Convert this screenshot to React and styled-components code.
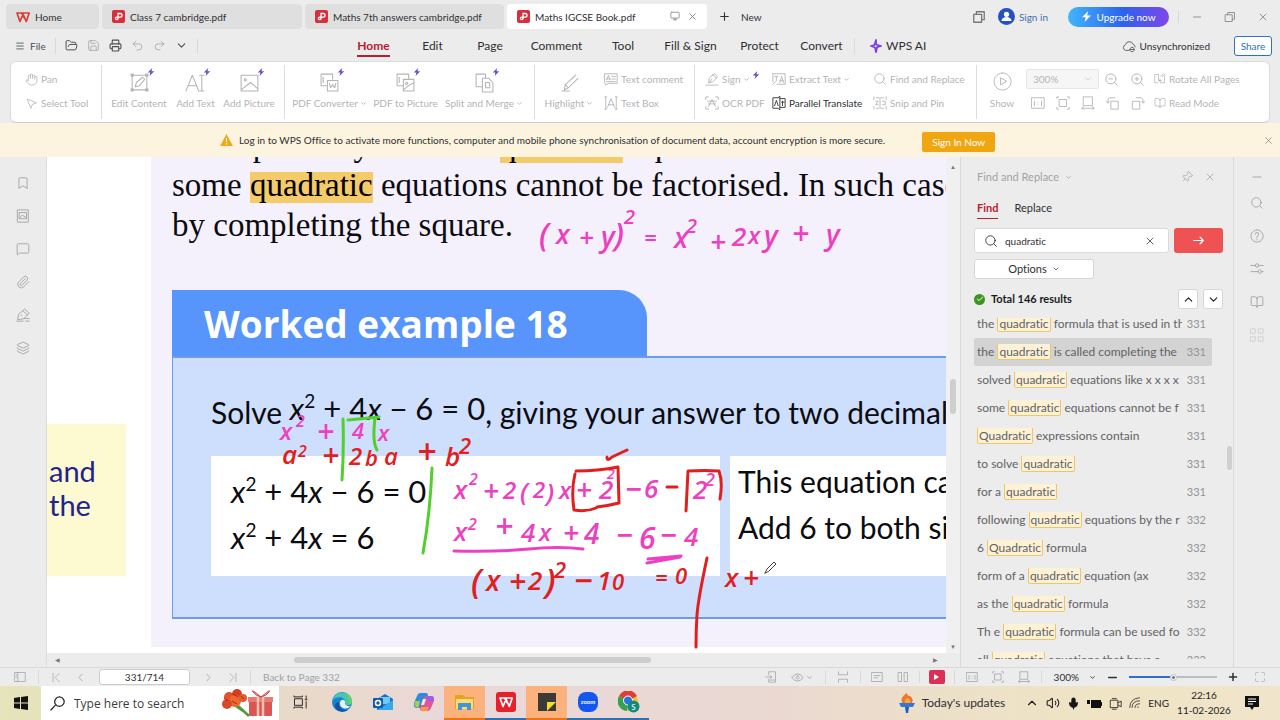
import React, { useState } from "react";
import styled, { createGlobalStyle, css } from "styled-components";
import {
    Bookmark, BookOpen, Check, ChevronDown, ChevronLeft, ChevronRight, ChevronUp, FolderOpen,
    Hand, Layers, Maximize, Menu, MessageSquare, Mic, Minus, Monitor, MousePointer2, Paperclip,
    PenTool, Pin, Plus, Printer, Redo2, Save, Search, Undo2, Volume2, X, ZoomIn, ZoomOut,
} from "lucide-react";

const Colors = {
    chrome: "#ececec",
    line: "#d9d9d9",
    text: "#2f2f33",
    faded: "#b4b4b6",
    red: "#b8202f",
    blue: "#2f6fc4",
    page: "#f4f1fd",
    header: "#5794fc",
    panel: "#cddffc",
    mark: "#f4cb68",
    pink: "#ec40c0",
    inkRed: "#e0201f",
    green: "#52cf2c",
};

const GlobalStyle = createGlobalStyle`
    * { box-sizing: border-box; }
    body { margin: 0; background: ${Colors.chrome}; }
    button, input, select { font: inherit; color: inherit; }
    button { background: none; border: 0; padding: 0; white-space: nowrap; }
    svg { flex: none; }
`;

const Window = styled.div`
    display: flex;
    flex-direction: column;
    height: 100vh;
    overflow: hidden;
    color: ${Colors.text};
    font-family: Lato, "Open Sans", sans-serif;
    font-size: 10px;
    font-variant-ligatures: none;
    line-height: 16px;
`;

const Rule = styled.span`
    width: 1px;
    height: 14px;
    background: ${Colors.line};
`;

/* title bar */

const TitleBar = styled.header`
    display: flex;
    align-items: center;
    height: 33px;
    padding: 0 11px 0 6px;
`;

const Tab = styled.button`
    display: flex;
    align-items: center;
    gap: 5px;
    width: ${({ $w }) => $w}px;
    height: 25px;
    margin-right: 3px;
    padding: 0 9px 0 10px;
    border-radius: 4px;
    background: ${({ $active }) => ($active ? "#fff" : "#dfdfdf")};
    color: ${Colors.text};
`;

const TabTools = styled.span`
    display: flex;
    gap: 7px;
    margin-left: auto;
    color: #88888c;
`;

const NewButton = styled.button`
    display: flex;
    align-items: center;
    gap: 10px;
    margin-left: 8px;
`;

const TitleRight = styled.div`
    display: flex;
    align-items: center;
    margin-left: auto;
    color: #77777a;
`;

const SignIn = styled.a`
    display: flex;
    align-items: center;
    gap: 4px;
    margin: 0 20px 0 12px;
    color: #3e70b4;
    text-decoration: none;
`;

const Upgrade = styled.button`
    display: flex;
    align-items: center;
    justify-content: center;
    gap: 4px;
    width: 101px;
    height: 20px;
    margin-right: 9px;
    border-radius: 10px;
    background: linear-gradient(90deg, #41b5fb, #2d62ee 55%, #8046ea);
    color: #fff;
`;

const WindowControls = styled.div`
    display: flex;
    align-items: center;
    gap: 21px;
    padding-left: 12px;
    border-left: 1px solid ${Colors.line};
`;

/* menu bar */

const MenuBar = styled.nav`
    display: flex;
    align-items: center;
    height: 28px;
    padding: 0 8px 3px 15px;
`;

const QuickTools = styled.div`
    display: flex;
    align-items: center;
    width: 329px;
    gap: 9px;
    color: #4d4d50;
`;

const FileButton = styled.button`
    display: flex;
    align-items: center;
    gap: 5px;
    padding-right: 9px;
    border-right: 1px solid ${Colors.line};
`;

const MenuItem = styled.button`
    width: ${({ $w }) => $w}px;
    height: 27px;
    font-size: 12px;
    text-align: center;

    span {
        display: inline-block;
        padding: 4px 0 1px;
        border-bottom: 2px solid transparent;
    }

    ${({ $active }) => $active && css`
        color: ${Colors.red};
        font-weight: 700;

        span { border-color: ${Colors.red}; }
    `}
`;

const AiButton = styled.button`
    display: flex;
    align-items: center;
    gap: 4px;
    padding-left: 15px;
    border-left: 1px solid ${Colors.line};
    font-size: 12px;
`;

const MenuRight = styled.div`
    display: flex;
    align-items: center;
    gap: 24px;
    margin-left: auto;
`;

const SyncState = styled.span`
    display: flex;
    align-items: center;
    gap: 3px;
`;

const ShareButton = styled.button`
    width: 38px;
    height: 20px;
    border: 1px solid ${Colors.blue};
    border-radius: 3px;
    background: #fff;
    color: ${Colors.blue};
`;

/* ribbon */

const Ribbon = styled.section`
    display: flex;
    height: 62px;
    flex: none;
    margin: 0 10px;
    border: 1px solid #dcdcdc;
    border-bottom-color: #cfcfcf;
    border-radius: 6px;
    background: #fff;
    color: ${Colors.faded};
`;

const Group = styled.div`
    display: flex;
    width: ${({ $w }) => $w}px;
    margin: 3px 0;
    padding: 2px 0 0 ${({ $pad }) => $pad}px;
    border-right: ${({ $last }) => ($last ? 0 : 1)}px solid #dedede;
`;

const Stack = styled.div`
    display: flex;
    flex-direction: column;
    width: ${({ $w }) => $w}px;
    padding-left: ${({ $pad }) => $pad || 0}px;
`;

const Label = styled.span`
    display: flex;
    align-items: center;
    gap: 2px;
`;

const SmallTool = styled.button`
    display: flex;
    align-items: center;
    gap: 3px;
    height: 24px;
    color: ${({ $on }) => ($on ? Colors.text : "inherit")};

    ${Label} svg + svg { align-self: flex-start; }
`;

const BigTool = styled.button`
    display: flex;
    flex-direction: column;
    align-items: center;
    width: ${({ $w }) => $w}px;
    height: 48px;
    padding-top: 5px;
`;

const BigIcon = styled.span`
    position: relative;
    height: 23px;

    > svg:nth-child(2) {
        position: absolute;
        left: 18px;
        top: -4px;
    }
`;

const ZoomSelect = styled.select`
    width: 73px;
    height: 20px;
    padding-left: 6px;
    appearance: none;
    border: 1px solid #e6e6e6;
    border-radius: 2px;
    background: #f6f6f6;
`;

const SelectWrap = styled.label`
    display: flex;
    align-items: center;

    svg { margin-left: -16px; }
`;

const IconRow = styled.div`
    display: flex;
    align-items: center;
    gap: ${({ $gap }) => $gap}px;
    height: 24px;
    padding-left: ${({ $pad }) => $pad}px;
`;

/* notice */

const Notice = styled.aside`
    display: flex;
    align-items: center;
    height: 34px;
    flex: none;
    padding: 0 6px 0 220px;
    background: #fdf4df;
`;

const NoticeText = styled.p`
    margin: 0 37px 0 6px;
    white-space: nowrap;
`;

const NoticeButton = styled.button`
    width: 73px;
    height: 20px;
    margin-top: 4px;
    border-radius: 2px;
    background: #f0a610;
    color: #fff;
`;

const CloseButton = styled.button`
    display: flex;
    margin-left: auto;
    color: #77777a;
`;

/* workspace */

const Workspace = styled.main`
    display: flex;
    flex: 1;
    min-height: 0;
`;

const Rail = styled.nav`
    display: flex;
    flex-direction: column;
    align-items: center;
    gap: 19px;
    width: ${({ $w }) => $w}px;
    padding-top: ${({ $top }) => $top}px;
    color: #a0a0a3;
`;

const RailButton = styled.button`
    display: flex;
    margin-bottom: ${({ $tight }) => ($tight ? -7 : 0)}px;
`;

const Viewer = styled.section`
    display: grid;
    grid-template: minmax(0, 1fr) 14px / minmax(0, 1fr) 14px;
    flex: 1;
    min-width: 0;
    border-left: 1px solid #dddddd;
`;

const Sheet = styled.div`
    position: relative;
    display: flex;
    padding-bottom: 6px;
    overflow: hidden;
    background: #fff;
`;

const Margin = styled.div`
    flex: none;
    width: 104px;
    padding-top: 267px;
`;

const SideNote = styled.p`
    width: 79px;
    height: 152px;
    margin: 0;
    padding: 30px 0 0 2px;
    background: #fdf9d0;
    color: #23238e;
    font-size: 29px;
    line-height: 34px;
`;

const Page = styled.article`
    flex: 1;
    min-width: 0;
    padding-left: 21px;
    overflow: hidden;
    background: ${Colors.page};
    color: #0b0b10;
    white-space: nowrap;
`;

const BodyText = styled.p`
    margin: -32px 0 45px;
    font-family: "Liberation Serif", serif;
    font-size: 33px;
    line-height: 40px;
`;

const Mark = styled.mark`
    display: inline-block;
    padding-bottom: 5px;
    background: ${Colors.mark};
    line-height: 26px;
`;

const ExampleTitle = styled.h2`
    width: 475px;
    height: 66px;
    margin: 0;
    padding-left: 32px;
    border-radius: 0 28px 0 0;
    background: ${Colors.header};
    color: #fff;
    font: 700 37px/68px "Open Sans", sans-serif;
`;

const ExampleBody = styled.div`
    height: 263px;
    padding: 34px 0 0 38px;
    border: solid #6a9ce8;
    border-width: 2px 0 2px 1px;
    background: ${Colors.panel};
    font-size: 30px;
    line-height: 36px;
`;

const Question = styled.p`
    height: 36px;
    margin: 0 0 28px;
`;

const Formula = styled.span`
    font-size: 31px;
    line-height: 28px;
    vertical-align: ${({ $raised }) => ($raised ? 4 : 0)}px;

    sup {
        font-size: 19px;
        line-height: 18px;
        vertical-align: 12px;
    }
`;

const Steps = styled.div`
    display: flex;
    gap: 10px;
`;

const StepCard = styled.div`
    width: ${({ $w }) => $w}px;
    height: 120px;
    flex: ${({ $w }) => ($w ? "none" : 1)};
    padding: ${({ $top }) => $top}px 0 0 ${({ $left }) => $left}px;
    overflow: hidden;
    background: #fff;
    line-height: 46px;
`;

const InkLayer = styled.svg`
    position: absolute;
    left: 0;
    top: 0;
    fill: none;
    stroke-width: 3;
    stroke-linecap: round;
    stroke-linejoin: round;

    text {
        font-family: "Open Sans", sans-serif;
        font-style: italic;
        font-weight: 600;
        stroke: none;
    }
`;

const ScrollY = styled.div`
    display: flex;
    flex-direction: column;
    align-items: center;
    justify-content: space-between;
    padding: 6px 0 2px;
    background: #f0f0f0;
    color: #77777a;
    font-size: 6px;
    line-height: 8px;
`;

const ThumbY = styled.span`
    width: 6px;
    height: 35px;
    margin-bottom: 22px;
    border-radius: 3px;
    background: #cecece;
`;

const ScrollX = styled.div`
    display: flex;
    align-items: center;
    justify-content: space-between;
    padding: 0 8px;
    color: #77777a;
    font-size: 6px;
`;

const ThumbX = styled.span`
    width: 357px;
    height: 6px;
    margin-right: 48px;
    border-radius: 3px;
    background: #cdcdcd;
`;

/* find panel */

const FindPanel = styled.aside`
    display: flex;
    flex-direction: column;
    width: 274px;
    padding: 12px 10px 8px 13px;
    border: solid ${Colors.line};
    border-width: 0 1px;
`;

const PanelHead = styled.div`
    display: flex;
    align-items: center;
    gap: 6px;
    height: 16px;
    padding: 0 7px 0 3px;
    color: #a3a3a6;
    font-size: 11px;
`;

const PanelTools = styled.span`
    display: flex;
    gap: 11px;
    margin-left: auto;
`;

const PanelTabs = styled.div`
    display: flex;
    gap: 16px;
    margin: 12px 0 9px;
    padding-left: 3px;
`;

const PanelTab = styled.button`
    height: 22px;
    border-bottom: 1px solid ${({ $active }) => ($active ? Colors.red : "transparent")};
    color: ${({ $active }) => ($active ? Colors.red : Colors.text)};
    font-weight: ${({ $active }) => ($active ? 700 : 400)};
    font-size: 11px;
`;

const SearchRow = styled.form`
    display: flex;
    gap: 5px;
`;

const SearchBox = styled.label`
    display: flex;
    flex: 1;
    align-items: center;
    min-width: 0;
    height: 25px;
    padding: 0 12px 0 9px;
    border: 1px solid #dadada;
    border-radius: 3px;
    background: #fff;

    input {
        flex: 1;
        min-width: 0;
        padding: 0 7px;
        border: 0;
        outline: 0;
        font-size: 10px;
    }
`;

const GoButton = styled.button`
    display: flex;
    flex: none;
    align-items: center;
    justify-content: center;
    width: 49px;
    height: 25px;
    border-radius: 3px;
    background: #ee5252;
    color: #fff;
`;

const OptionsButton = styled.button`
    display: flex;
    align-items: center;
    justify-content: center;
    gap: 5px;
    width: 120px;
    height: 20px;
    margin: 6px 0 10px;
    border: 1px solid #d6d6d6;
    border-radius: 3px;
    background: #fff;
    font-size: 11px;
`;

const Summary = styled.div`
    display: flex;
    align-items: center;
    height: 20px;
    gap: 5px;
    color: #1c1c1f;
    font-size: 11px;

    strong { margin: 0 auto 0 1px; }
`;

const Done = styled.span`
    display: flex;
    align-items: center;
    justify-content: center;
    width: 11px;
    height: 11px;
    border-radius: 50%;
    background: #3c9322;
    color: #fff;
`;

const StepButton = styled.button`
    display: flex;
    align-items: center;
    justify-content: center;
    width: 20px;
    height: 20px;
    border: 1px solid #d6d6d6;
    border-radius: 3px;
    background: #fff;
`;

const ResultsArea = styled.div`
    display: flex;
    justify-content: space-between;
    flex: 1;
    min-height: 0;
    margin: 9px -9px 0 0;
    overflow: hidden;
`;

const Results = styled.ul`
    flex: none;
    width: 238px;
    margin: -8px 0 0;
    padding: 0;
    list-style: none;
`;

const Result = styled.li`
    display: flex;
    align-items: center;
    gap: 5px;
    height: 28px;
    padding: 0 6px 0 3px;
    border-radius: 2px;
    background: ${({ $selected }) => ($selected ? "#d3d3d3" : "none")};
    color: #626266;
    font-size: 12px;

    small {
        color: #929296;
        font-size: 11px;
    }
`;

const Snippet = styled.span`
    flex: 1;
    overflow: hidden;
    white-space: nowrap;
`;

const Hit = styled.span`
    padding: 0 1px;
    border: 1px solid #efc566;
    border-radius: 2px;
    background: #fdf1d6;
`;

const ResultThumb = styled.span`
    width: 5px;
    height: 24px;
    margin-top: 128px;
    border-radius: 3px;
    background: #d0d0d0;
`;

/* status bar */

const StatusBar = styled.footer`
    display: flex;
    align-items: center;
    height: 19px;
    flex: none;
    padding: 0 14px;
    border-top: 1px solid ${Colors.line};
    color: #a0a0a3;
`;

const StatusGroup = styled.div`
    display: flex;
    align-items: center;
    gap: ${({ $gap }) => $gap}px;
    padding: 0 ${({ $pad }) => $pad || 0}px;
    border-right: ${({ $rule }) => ($rule ? 1 : 0)}px solid ${Colors.line};
`;

const StatusSpacer = styled.span`
    flex: 1;
`;

const PageInput = styled.input`
    width: 91px;
    height: 16px;
    padding: 0;
    border: 1px solid #cccccc;
    border-radius: 3px;
    background: #fff;
    color: ${Colors.text};
    text-align: center;
`;

const PlayButton = styled.button`
    display: flex;
    align-items: center;
    justify-content: center;
    width: 16px;
    height: 14px;
    border-radius: 2px;
    background: #dc2f57;
`;

const ZoomControls = styled.div`
    display: flex;
    align-items: center;
    gap: 10px;
    padding-left: 12px;
    color: ${Colors.text};
`;

const ZoomSlider = styled.input`
    width: 88px;
    height: 8px;
    margin: 0;
    appearance: none;
    background: linear-gradient(90deg, ${Colors.blue} 50%, #bdbdbd 50%) center / 100% 2px no-repeat;

    &::-webkit-slider-thumb {
        appearance: none;
        width: 5px;
        height: 5px;
        border: 1px solid #fff;
        border-radius: 50%;
        background: #777;
        box-shadow: 0 0 0 1px #ccc;
    }
`;

const FullScreen = styled.button`
    display: flex;
    margin-left: 5px;
    color: #aaaaaa;
`;

/* taskbar */

const Taskbar = styled.footer`
    display: flex;
    height: 34px;
    flex: none;
    background: linear-gradient(90deg, #e6e4bb, #e8d9c9 24%, #ead8da 36%, #ead8d2 60%, #ecdfc9 72%, #efe4c4 86%, #f0e4cb);
`;

const StartButton = styled.button`
    display: flex;
    align-items: center;
    justify-content: center;
    width: 41px;
`;

const TaskSearch = styled.label`
    display: flex;
    align-items: center;
    gap: 9px;
    width: 238px;
    margin-right: 1px;
    padding: 0 6px 0 9px;
    background: #fff;

    input {
        flex: 1;
        min-width: 0;
        padding: 0;
        border: 0;
        outline: 0;
        background: none;
        font: 12px "Open Sans", sans-serif;
    }

    input::placeholder { color: #3c3c40; opacity: 1; }
`;

const TaskApp = styled.button`
    display: flex;
    align-items: center;
    justify-content: center;
    width: 41px;
    border-bottom: 2px solid ${({ $open }) => ($open === "alert" ? "#f2730e" : $open ? "#2a72b8" : "transparent")};
    background: ${({ $open }) => ($open === "alert" ? "#fbb27c" : "none")};
`;

const News = styled.button`
    display: flex;
    align-items: center;
    gap: 7px;
    margin-left: auto;
    font-size: 12px;
`;

const Tray = styled.div`
    display: flex;
    align-items: center;
    gap: 7px;
    padding: 0 21px 0 20px;
    color: #1d1d1f;
`;

const Clock = styled.time`
    display: flex;
    flex-direction: column;
    width: 56px;
    margin-right: 6px;
    line-height: 15px;
    text-align: center;
`;

/* drawings */

const Glyph = ({ d, size = 14, box = 16, color = "currentColor", weight = 1 }) => (
    <svg width={size} height={size} viewBox={`0 0 ${box} ${box}`} fill="none" stroke={color} strokeWidth={weight} strokeLinejoin="round" strokeLinecap="round">
        <path d={d} />
    </svg>
);

const Bolt = ({ size = 8, color = "#5b55c8" }) => (
    <svg width={size} height={size} viewBox="0 0 8 8" fill={color}><path d="M5.2 0 0.8 4.6h2.6L2.6 8l4.6-4.8H4.5z" /></svg>
);

const Down = ({ size = 7 }) => <ChevronDown size={size} strokeWidth={3} />;

const WpsLogo = ({ size = 14, color = "#dc3c36" }) => (
    <svg width={size} height={size} viewBox="0 0 14 14" fill="none" stroke={color} strokeWidth="1.7" strokeLinejoin="round">
        <path d="M1 3h12.2L10.3 11.5 7 4.2 4 11.5 1 3l4.6 0 2.7 5.2" />
    </svg>
);

const PdfIcon = () => (
    <svg width="13" height="13" viewBox="0 0 13 13" fill="none">
        <rect width="13" height="13" rx="2" fill="#d92f3d" />
        <path d="M6 9.5V3.5h2.2a1.8 1.8 0 0 1 0 3.7H4.6a1.2 1.2 0 1 0 1.2 1.4" stroke="#fff" strokeWidth="1.3" />
    </svg>
);

const Avatar = () => (
    <svg width="17" height="17" viewBox="0 0 17 17">
        <circle cx="8.5" cy="8.5" r="8.5" fill="#2450c4" />
        <circle cx="8.5" cy="6.3" r="2.6" fill="#fff" />
        <path d="M3.5 13a5 4 0 0 1 10 0z" fill="#fff" />
    </svg>
);

const Spark = () => (
    <svg width="12" height="14" viewBox="0 0 12 14" fill="none" stroke="#7d3fdc" strokeWidth="1.8" strokeLinejoin="round">
        <path d="M6 1v4.5L11 7 7 8.2 6 13 5 8.5 1 7l3.5-1z" />
    </svg>
);

const paths = {
    edit: "M3 3h14v14H3zM2 2h2v2H2zM16 2h2v2h-2zM2 16h2v2H2zM16 16h2v2h-2zM6 14l1-4 6-5 2 2-5 6z",
    type: "M1 18 7 3l6 15M3 13h8M14 3h4M16 3v15M14 18h4",
    picture: "M2 3h16v15H2zM6 6.5a1 1 0 1 0 .1 0M2 17l9-7 7 6",
    convert: "M7 13H2V2h11v5M8 8h10v10H8zM10 11l1 4 2-3 2 3 1-4M4 5v5",
    toPicture: "M7 13H2V2h11v4M4 5v5M8 7h10v11H8zM8 17l5-4 5-3M11 10a1 1 0 1 0 .1 0",
    merge: "M8 14H2V2h9v4M8 6h6l4 4v9H8zM11 10v5h4v-5z",
    marker: "M3 18h7M5 17l1-5 3 3zM6 12 16 3M9 15l9-9",
    comment: "M1 2h14v11H5l-3 2-1-2zM3 9l2-5 2 5M3 8h4M9 5h4M9 8h4M3 11h10",
    textBox: "M2 1v14M14 1v14M1 1h2M13 1h2M1 15h2M13 15h2M4 13l4-10 4 10M5 10h6",
    sign: "M1 15h14M4 12l1-5 4-4 4 4-4 4zM8 4l3-2 3 3-1 2M5 12l3-4",
    extract: "M1 2h14v12H6M1 2v9M1 14l3-3M3 5h4M5 5v5M9 12l2-7 2 7M9 10h4",
    ocr: "M1 4V1h3M12 1h3v3M1 12v3h3M12 15h3v-3M4 12l4-8 4 8M3 6h10M4 9h8",
    translate: "M7 2H1v12h6l2 2V0L7 2M9 3h6v10H9M3 11l2-6 2 6M11 7h3M12 6v5",
    snip: "M1 1v3M4 2h3M9 2h3M15 1v3M1 12v3M4 14h3M9 14h3M15 12v3M3 6h3l-3 4h3M8 3v10M11 6h3v4h-3",
    actual: "M1 2h14v12H1zM4 6v5M12 6v5M8 7v0M8 10v0",
    fitPage: "M4 4h8v8H4zM1 3V1h2M13 1h2v2M1 13v2h2M13 15h2v-2",
    fitWidth: "M3 1h10v10H3zM1 14h14M3 12l-2 2 2 2M13 12l2 2-2 2",
    rotateLeft: "M6 6h8v9H6zM10 2H4Q2 2 2 8M0 6l2 2 2-2",
    rotateRight: "M2 6h8v9H2zM6 2h6q2 0 2 6M12 6l2 2 2-2",
    rotateAll: "M5 13H1V2h5v8M6 10h4M9 4h5v9H8V8M11 2l2-1 2 2",
    sidebar: "M1 2h14v12H1zM5 2v12M2.5 5h1M2.5 8h1",
    sliders: "M1 4h5M10 4h5M1 11h8M13 11h2M6 4a2 2 0 1 0 4 0 2 2 0 1 0-4 0M9 11a2 2 0 1 0 4 0 2 2 0 1 0-4 0",
    thumbs: "M2 1h12v14H2zM4 4h8v7H4zM4 10l3-3 5 3",
    signature: "M2 13l1-6 5-4 5 5-4 4zM8 3l2-2 5 5-2 2M6 8v1M9 12h6M11 15h4M1 15h7",
    tiles: "M1 1h5v5H1zM10 1h5v5h-5zM1 10h5v5H1zM10 10h5v5h-5z",
    help: "M8 1a7 7 0 1 0 .1 0M6 6q0-2 2-2t2 2q0 1-2 2.5V10M8 12v.5",
    eye: "M1 8q7-9 14 0-7 9-14 0M8 6a2 2 0 1 0 .1 0",
    split: "M2 1v4h12V1M2 15v-4h12v4",
    note: "M1 2h14v12H1zM4 6h8M4 9h5",
    columns: "M2 2h4v12H2zM10 2h4v12h-4z",
    phone: "M5 5V1h9v14H5v-4M1 8h8M7 6l2 2-2 2M6 12h7",
    first: "M3 2v12M12 2 6 8l6 6",
    last: "M13 2v12M4 2l6 6-6 6",
    cloud: "M8 13H4a3.4 3.4 0 0 1 0-6.5A4.5 4.5 0 0 1 12.6 6 3.2 3.2 0 0 1 15 9M9 12h5M11.5 9.5a2.5 2.5 0 1 0 .1 0",
    restore: "M2 5h9v9H2zM5 5V2h9v9h-3",
    taskView: "M1 1v1h9V1M2 4h8v7H2zM1 14v-1h9v1M14 1v3M14 7v7M13 5h2",
    camera: "M2 4h9v9H2zM11 7l4-2v7l-4-2M4 2h5M4 15h5",
    wifi: "M1 14Q1 2 14 1M4 14Q4 5 14 5M8 14Q8 9 14 9M12 13v1",
};

const Flowers = () => (
    <svg width="52" height="28" viewBox="0 0 52 28">
        <path d="M16 16 28 27M12 15l13 9" stroke="#4f9a3d" strokeWidth="2.5" />
        <circle cx="8" cy="8" r="5" fill="#e2532b" /><circle cx="16" cy="5" r="5" fill="#d43f24" />
        <circle cx="14" cy="12" r="6" fill="#ec6a31" /><circle cx="6" cy="15" r="5" fill="#d9482a" />
        <circle cx="22" cy="9" r="4" fill="#e55a2d" />
        <path d="M3 9l4 3M12 5l5 3M11 12l5 3M20 7l3 3" stroke="#a72c18" />
        <rect x="28" y="9" width="23" height="18" rx="1" fill="#dc5555" />
        <path d="M27 8h25v5H27z" fill="#e97b75" />
        <path d="M37 8v19M42 8v19" stroke="#f6c2b4" strokeWidth="2.5" />
        <path d="M40 8q-11-9-8-5t8 5q11-9 8-5t-8 5" fill="#f3a79d" stroke="#c94848" />
    </svg>
);

const WindowsLogo = () => (
    <svg width="14" height="14" viewBox="0 0 14 14" fill="#111">
        <path d="M0 2 6 1v5.6H0zM7 .9 14 0v6.6H7zM0 7.5h6V13l-6-1zM7 7.5h7V14l-7-.9z" />
    </svg>
);

const EdgeIcon = () => (
    <svg width="20" height="20" viewBox="0 0 20 20">
        <circle cx="10" cy="10" r="10" fill="#1b7fd2" />
        <path d="M1 8C3-2 19-2 20 9c0 5-7 5-7 2 1-7-9-7-12-3z" fill="#45c7b4" />
        <path d="M12 1q7 2 8 8 0 4-4 4 3-6-4-12z" fill="#6ad35c" />
        <path d="M7 10q-1 9 9 8-6 4-12-1-3-6 3-7z" fill="#1553a0" />
        <path d="M8 10q2-4 5-1v3q4 4 6 1-3 5-8 3-4-2-3-6z" fill="#e6f2f4" />
    </svg>
);

const OutlookIcon = () => (
    <svg width="20" height="18" viewBox="0 0 20 18">
        <path d="M4 6 12 1l8 5v11H4z" fill="#1b6ec2" /><path d="M7 4h10v7H7z" fill="#6dcbf4" />
        <path d="M4 17 20 7v10z" fill="#38a8ec" /><rect y="5" width="10" height="10" rx="1" fill="#0f5cab" />
        <circle cx="5" cy="10" r="2.5" fill="none" stroke="#fff" strokeWidth="1.5" />
    </svg>
);

const CopilotIcon = () => (
    <svg width="20" height="18" viewBox="0 0 20 18">
        <path d="M6 0h6q2 0 2 3L11 12q-1 3-4 3H3q-4 0-3-5L3 3q1-3 3-3z" fill="#2f8be0" />
        <path d="M1 8h5l-1 5q0 3-3 1-2-1-1-6z" fill="#a9cf45" />
        <path d="M14 18H8q-2 0-2-3L9 6q1-3 4-3h4q4 0 3 5l-3 7q-1 3-3 3z" fill="#e0569b" />
        <path d="M12 3h5q4 0 3 5h-6q-1-5-2-5z" fill="#9b5fe0" /><path d="M7 14h8l-2 4H8q-2 0-1-4z" fill="#f79a43" />
        <path d="M9 6h3l-2 6H7z" fill="#f3e9e6" />
    </svg>
);

const FolderIcon = () => (
    <svg width="19" height="17" viewBox="0 0 19 17">
        <path d="M0 1h8l2 2h9v12H0z" fill="#e3a51f" /><path d="M1 5h17v10H1z" fill="#fcd975" />
        <path d="M3 16V9h13v7h-4v-3H7v3z" fill="#3e97d8" />
    </svg>
);

const NotesIcon = () => (
    <svg width="18" height="18" viewBox="0 0 18 18"><path d="M0 0h18v18H0z" fill="#3a3a38" /><path d="M9 9h9l-9 9z" fill="#f7dd25" /></svg>
);

const ZoomAppIcon = () => (
    <svg width="20" height="20" viewBox="0 0 20 20">
        <rect width="20" height="20" rx="8" fill="#1457ee" />
        <text x="10" y="12" fontSize="6" fontWeight="700" textAnchor="middle" fill="#fff">zoom</text>
    </svg>
);

const ChromeIcon = () => (
    <svg width="22" height="22" viewBox="0 0 22 22">
        <circle cx="10" cy="10" r="10" fill="#f5c431" /><path d="M10 10 1 5a10 10 0 0 1 18 0z" fill="#df3f35" />
        <path d="M10 10 1 5a10 10 0 0 0 8 15z" fill="#35a253" /><circle cx="10" cy="9.500" r="4.500" fill="#2d70e0" stroke="#fff" />
        <circle cx="15.500" cy="15.500" r="6" fill="#14897d" />
        <text x="15.500" y="18.500" fontSize="8" textAnchor="middle" fill="#fff">S</text>
    </svg>
);

const TorchIcon = () => (
    <svg width="16" height="20" viewBox="0 0 16 20">
        <path d="M3 10Q1 4 8 0q0 3 3 3 4 3 2 7z" fill="#f0762e" /><path d="M6 10q-1-4 3-5 3 2 2 5z" fill="#f7a83f" />
        <path d="M0 10h16l-2 4H2z" fill="#2f78dc" /><path d="M6 14h4l-1 6H7z" fill="#2259bd" />
    </svg>
);

const MessageIcon = () => (
    <svg width="14" height="14" viewBox="0 0 14 14"><path d="M0 0h14v11H9l-2 3-2-3H0z" fill="#111" /><path d="M3 3h8M3 5.500h8M3 8h5" stroke="#fff" /></svg>
);

/* pen annotations: text, x, baseline, size */
const pinkInk = [
    ["(", 540, 246, 32], ["x", 557, 244, 27], ["+", 580, 247, 26], ["y", 602, 247, 28], [")", 615, 246, 32], ["2", 625, 224, 20],
    ["=", 645, 246, 22], ["x", 675, 248, 28], ["2", 687, 233, 20], ["+", 711, 252, 28], ["2", 733, 246, 26], ["x", 749, 244, 24],
    ["y", 765, 246, 28], ["+", 793, 244, 30], ["y", 827, 245, 28],
    ["x", 281, 440, 24], ["2", 297, 427, 16], ["+", 318, 442, 30], ["4", 353, 439, 22], ["x", 379, 441, 22],
    ["x", 455, 499, 26], ["2", 470, 485, 16], ["+", 484, 501, 28], ["2", 504, 499, 24], ["(", 521, 501, 26], ["2", 534, 498, 22],
    [")", 547, 502, 26], ["x", 560, 499, 24], ["+", 577, 500, 28], ["2", 600, 499, 26], ["2", 608, 479, 14], ["−", 626, 500, 30],
    ["6", 645, 498, 26], ["2", 694, 499, 26], ["2", 706, 486, 18],
    ["x", 455, 541, 26], ["2", 469, 530, 16], ["+", 496, 538, 32], ["4", 522, 542, 26], ["x", 540, 541, 24], ["+", 564, 543, 28],
    ["4", 585, 544, 28], ["−", 617, 546, 30], ["6", 640, 549, 30], ["−", 661, 546, 30], ["4", 685, 546, 26],
];

const redInk = [
    ["a", 283, 464, 26], ["2", 299, 457, 16], ["+", 323, 466, 30], ["2", 350, 465, 24], ["b", 366, 466, 22], ["a", 385, 465, 24],
    ["+", 418, 464, 34], ["b", 446, 466, 26], ["2", 460, 454, 22],
    ["(", 472, 594, 34], ["x", 487, 591, 28], ["+", 510, 592, 30], ["2", 529, 590, 26], [")", 546, 594, 34], ["2", 555, 578, 22],
    ["−", 575, 593, 34], ["1", 598, 590, 26], ["0", 613, 590, 22], ["=", 656, 586, 22], ["0", 676, 584, 22],
    ["x", 726, 587, 26], ["+", 744, 588, 28],
];

const Ink = ({ marks, color }) => (
    <g fill={color}>
        {marks.map(([text, x, y, size], i) => <text key={i} x={x} y={y} fontSize={size}>{text}</text>)}
    </g>
);

const Annotations = () => (
    <InkLayer width="898" height="496" viewBox="48 157 898 496">
        <Ink marks={pinkInk} color={Colors.pink} />
        <Ink marks={redInk} color={Colors.inkRed} />
        <path stroke={Colors.pink} d="M455 551Q500 552 530 549T584 549M648 563 681 557M649 559 682 556" />
        <path stroke={Colors.inkRed} d="M577 471Q599 471 619 467L620 503Q608 506 598 507M597 508Q588 512 575 510 572 490 576 474M687 511 689 471Q705 470 720 471 724 482 721 499M668 487H678M608 457Q608 462 613 457L628 450M708 558Q699 600 698 615T697 647" />
        <path stroke={Colors.green} d="M344 419Q345 450 343 480M349 420 380 417M376 418Q373 442 378 450M433 468Q431 515 424 553" />
        <path stroke="#444" strokeWidth="1" fill="#fff" d="M766 573 768 569 775 562 777 564 770 571z" />
    </InkLayer>
);

/* content */

const menuItems = [["Home", 59], ["Edit", 59], ["Page", 56], ["Comment", 77], ["Tool", 56], ["Fill & Sign", 79], ["Protect", 59], ["Convert", 65]];

const results = [
    ["the ", "quadratic", " formula that is used in th", 331],
    ["the ", "quadratic", " is called completing the", 331],
    ["solved ", "quadratic", " equations like x x x x", 331],
    ["some ", "quadratic", " equations cannot be f", 331],
    ["", "Quadratic", " expressions contain", 331],
    ["to solve ", "quadratic", "", 331],
    ["for a ", "quadratic", "", 331],
    ["following ", "quadratic", " equations by the r", 332],
    ["6 ", "Quadratic", " formula", 332],
    ["form of a ", "quadratic", " equation (ax", 332],
    ["as the ", "quadratic", " formula", 332],
    ["Th e ", "quadratic", " formula can be used fo", 332],
    ["all ", "quadratic", " equations that have r", 332],
];

const Big = ({ w, icon, label, bolt, more }) => (
    <BigTool $w={w}>
        <BigIcon>
            <Glyph d={paths[icon]} size={21} box={20} />
            {bolt && <Bolt />}
        </BigIcon>
        <Label>{label}{more && <Down />}</Label>
    </BigTool>
);

const Small = ({ icon, children, on, more, bolt }) => (
    <SmallTool $on={on}>
        {typeof icon === "string" ? <Glyph d={paths[icon]} /> : icon}
        <Label>{children}{more && <Down />}{bolt && <Bolt />}</Label>
    </SmallTool>
);

export default function App() {
    const [term, setTerm] = useState("quadratic");
    const [pageNo, setPageNo] = useState("331/714");

    return (
        <Window>
            <GlobalStyle />
            <TitleBar>
                <Tab $w={93}><WpsLogo />Home</Tab>
                <Tab $w={200}><PdfIcon />Class 7 cambridge.pdf</Tab>
                <Tab $w={199}><PdfIcon />Maths 7th answers cambridge.pdf</Tab>
                <Tab $w={200} $active>
                    <PdfIcon />Maths IGCSE Book.pdf
                    <TabTools><Monitor size={10} /><X size={11} /></TabTools>
                </Tab>
                <NewButton><Plus size={13} strokeWidth={2} />New</NewButton>
                <TitleRight>
                    <Glyph d={paths.restore} weight={1.5} />
                    <SignIn href="#signin"><Avatar />Sign in</SignIn>
                    <Upgrade><Bolt size={11} color="#fff" />Upgrade now</Upgrade>
                    <WindowControls>
                        <Minus size={12} strokeWidth={1.5} />
                        <Glyph d={paths.restore} size={12} />
                        <X size={12} strokeWidth={1.5} />
                    </WindowControls>
                </TitleRight>
            </TitleBar>

            <MenuBar>
                <QuickTools>
                    <FileButton><Menu size={10} />File</FileButton>
                    <FolderOpen size={13} strokeWidth={1.8} />
                    <Save size={13} strokeWidth={1.5} color="#a5a5a8" />
                    <Printer size={13} strokeWidth={2} />
                    <Undo2 size={13} strokeWidth={1.5} color="#a5a5a8" />
                    <Redo2 size={13} strokeWidth={1.5} color="#a5a5a8" />
                    <ChevronDown size={13} />
                    <Rule />
                </QuickTools>
                {menuItems.map(([name, w]) => (
                    <MenuItem key={name} $w={w} $active={name === "Home"}><span>{name}</span></MenuItem>
                ))}
                <AiButton><Spark />WPS AI</AiButton>
                <MenuRight>
                    <SyncState><Glyph d={paths.cloud} color="#555" />Unsynchronized</SyncState>
                    <ShareButton>Share</ShareButton>
                </MenuRight>
            </MenuBar>

            <Ribbon>
                <Group $w={91} $pad={14}>
                    <Stack>
                        <Small icon={<Hand size={13} strokeWidth={1.5} />}>Pan</Small>
                        <Small icon={<MousePointer2 size={13} strokeWidth={1.5} />}>Select Tool</Small>
                    </Stack>
                </Group>
                <Group $w={183} $pad={7}>
                    <Big w={60} icon="edit" label="Edit Content" bolt />
                    <Big w={53} icon="type" label="Add Text" bolt />
                    <Big w={54} icon="picture" label="Add Picture" bolt />
                </Group>
                <Group $w={250} $pad={6}>
                    <Big w={77} icon="convert" label="PDF Converter" bolt more />
                    <Big w={75} icon="toPicture" label="PDF to Picture" bolt />
                    <Big w={82} icon="merge" label="Split and Merge" bolt more />
                </Group>
                <Group $w={160} $pad={7}>
                    <Big w={54} icon="marker" label="Highlight" more />
                    <Stack $w={95} $pad={8}>
                        <Small icon="comment">Text comment</Small>
                        <Small icon="textBox">Text Box</Small>
                    </Stack>
                </Group>
                <Group $w={282} $pad={10}>
                    <Stack $w={67}>
                        <Small icon="sign" more bolt>Sign</Small>
                        <Small icon="ocr">OCR PDF</Small>
                    </Stack>
                    <Stack $w={101}>
                        <Small icon="extract" more>Extract Text</Small>
                        <Small icon="translate" on>Parallel Translate</Small>
                    </Stack>
                    <Stack $w={100}>
                        <Small icon={<Search size={14} strokeWidth={1.5} />}>Find and Replace</Small>
                        <Small icon="snip">Snip and Pin</Small>
                    </Stack>
                </Group>
                <Group $last $pad={5}>
                    <BigTool $w={40}>
                        <BigIcon><Glyph d="M10 1a9 9 0 1 0 .1 0M8 6.500v7l6-3.500z" size={19} box={20} /></BigIcon>
                        <Label>Show</Label>
                    </BigTool>
                    <Stack>
                        <IconRow $gap={11} $pad={4}>
                            <SelectWrap>
                                <ZoomSelect aria-label="Zoom" defaultValue="300%"><option>300%</option></ZoomSelect>
                                <ChevronDown size={10} strokeWidth={1.5} />
                            </SelectWrap>
                            <ZoomOut size={15} strokeWidth={1.5} />
                            <ZoomIn size={15} strokeWidth={1.5} />
                        </IconRow>
                        <IconRow $gap={11} $pad={9}>
                            <Glyph d={paths.actual} />
                            <Glyph d={paths.fitPage} />
                            <Glyph d={paths.fitWidth} />
                            <Glyph d={paths.rotateLeft} />
                            <Glyph d={paths.rotateRight} />
                        </IconRow>
                    </Stack>
                    <Stack $pad={9}>
                        <Small icon={<Glyph d={paths.rotateAll} size={12} />}>Rotate All Pages</Small>
                        <Small icon={<BookOpen size={12} strokeWidth={1.5} />}>Read Mode</Small>
                    </Stack>
                </Group>
            </Ribbon>

            <Notice>
                <svg width="13" height="12" viewBox="0 0 13 12"><path d="M6.500 0 13 12H0z" fill="#efaa1c" /><path d="M6.500 4v4M6.500 9v1.500" stroke="#fff" /></svg>
                <NoticeText>Log in to WPS Office to activate more functions, computer and mobile phone synchronisation of document data, account encryption is more secure.</NoticeText>
                <NoticeButton>Sign In Now</NoticeButton>
                <CloseButton aria-label="Close"><X size={11} strokeWidth={1.5} /></CloseButton>
            </Notice>

            <Workspace>
                <Rail $w={46} $top={19}>
                    <RailButton aria-label="Bookmarks"><Bookmark size={14} strokeWidth={1.5} /></RailButton>
                    <RailButton aria-label="Thumbnails"><Glyph d={paths.thumbs} /></RailButton>
                    <RailButton aria-label="Comments"><MessageSquare size={14} strokeWidth={1.5} /></RailButton>
                    <RailButton aria-label="Attachments"><Paperclip size={14} strokeWidth={1.5} /></RailButton>
                    <RailButton aria-label="Signatures"><Glyph d={paths.signature} /></RailButton>
                    <RailButton aria-label="Layers"><Layers size={14} strokeWidth={1.5} /></RailButton>
                </Rail>

                <Viewer>
                    <Sheet>
                        <Margin>
                            <SideNote>and<br />the</SideNote>
                        </Margin>
                        <Page>
                            <BodyText>
                                It has probably included <Mark>quadratic</Mark> equations<br />
                                some <Mark>quadratic</Mark> equations cannot be factorised. In such cases<br />
                                by completing the square.
                            </BodyText>
                            <ExampleTitle>Worked example 18</ExampleTitle>
                            <ExampleBody>
                                <Question>
                                    Solve <Formula $raised><i>x</i><sup>2</sup> + 4<i>x</i> − 6 = 0</Formula>, giving your answer to two decimal
                                </Question>
                                <Steps>
                                    <StepCard $w={509} $top={12} $left={20}>
                                        <Formula><i>x</i><sup>2</sup> + 4<i>x</i> − 6 = 0</Formula><br />
                                        <Formula><i>x</i><sup>2</sup> + 4<i>x</i> = 6</Formula>
                                    </StepCard>
                                    <StepCard $top={2} $left={8}>
                                        This equation cannot<br />
                                        Add 6 to both sides
                                    </StepCard>
                                </Steps>
                            </ExampleBody>
                        </Page>
                        <Annotations />
                    </Sheet>
                    <ScrollY><span>▲</span><ThumbY /><span>▼</span></ScrollY>
                    <ScrollX><span>◀</span><ThumbX /><span>▶</span></ScrollX>
                </Viewer>

                <FindPanel>
                    <PanelHead>
                        Find and Replace <Down />
                        <PanelTools><Pin size={12} strokeWidth={1.5} transform="rotate(45)" /><X size={12} strokeWidth={1.5} /></PanelTools>
                    </PanelHead>
                    <PanelTabs>
                        <PanelTab $active>Find</PanelTab>
                        <PanelTab>Replace</PanelTab>
                    </PanelTabs>
                    <SearchRow onSubmit={(e) => e.preventDefault()}>
                        <SearchBox>
                            <Search size={14} strokeWidth={1.5} />
                            <input aria-label="Find text" value={term} onChange={(e) => setTerm(e.target.value)} />
                            <X size={12} strokeWidth={1.5} />
                        </SearchBox>
                        <GoButton aria-label="Find next"><Glyph d="M2 8h12M10 4l4 4-4 4" weight={1.5} size={13} /></GoButton>
                    </SearchRow>
                    <OptionsButton>Options <ChevronDown size={8} /></OptionsButton>
                    <Summary>
                        <Done><Check size={8} strokeWidth={3} /></Done>
                        <strong>Total 146 results</strong>
                        <StepButton aria-label="Previous result"><ChevronUp size={13} /></StepButton>
                        <StepButton aria-label="Next result"><ChevronDown size={13} /></StepButton>
                    </Summary>
                    <ResultsArea>
                        <Results>
                            {results.map(([before, hit, after, page], i) => (
                                <Result key={i} $selected={i === 1}>
                                    <Snippet>{before}<Hit>{hit}</Hit>{after}</Snippet>
                                    <small>{page}</small>
                                </Result>
                            ))}
                        </Results>
                        <ResultThumb />
                    </ResultsArea>
                </FindPanel>

                <Rail $w={46} $top={13}>
                    <RailButton aria-label="Collapse" $tight><Minus size={14} strokeWidth={1.5} /></RailButton>
                    <RailButton aria-label="Search"><Search size={14} strokeWidth={1.5} /></RailButton>
                    <RailButton aria-label="Help"><Glyph d={paths.help} /></RailButton>
                    <RailButton aria-label="Settings"><Glyph d={paths.sliders} /></RailButton>
                    <RailButton aria-label="Dictionary"><BookOpen size={14} strokeWidth={1.5} /></RailButton>
                    <RailButton aria-label="Apps"><Glyph d={paths.tiles} color="#cfcfd1" /></RailButton>
                </Rail>
            </Workspace>

            <StatusBar>
                <StatusGroup $gap={12}>
                    <Glyph d={paths.sidebar} size={12} />
                    <Rule />
                    <Glyph d={paths.first} size={11} />
                    <ChevronLeft size={13} strokeWidth={1.5} />
                    <PageInput aria-label="Page" value={pageNo} onChange={(e) => setPageNo(e.target.value)} />
                    <ChevronRight size={13} strokeWidth={1.5} />
                    <Glyph d={paths.last} size={11} />
                    <Rule />
                    Back to Page 332
                </StatusGroup>
                <StatusSpacer />
                <StatusGroup $gap={14} $pad={12} $rule>
                    <Glyph d={paths.phone} size={12} />
                    <Label><Glyph d={paths.eye} size={13} /><Down /></Label>
                </StatusGroup>
                <StatusGroup $pad={11} $rule><Glyph d={paths.split} size={12} /></StatusGroup>
                <StatusGroup $gap={14} $pad={10} $rule>
                    <Glyph d={paths.note} size={12} />
                    <Glyph d={paths.columns} size={12} />
                </StatusGroup>
                <StatusGroup $pad={9} $rule>
                    <PlayButton aria-label="Play"><svg width="7" height="8" viewBox="0 0 7 8"><path d="M1 1 6 4 1 7z" fill="#fff" /></svg></PlayButton>
                </StatusGroup>
                <StatusGroup $gap={14} $pad={11} $rule>
                    <Glyph d={paths.actual} size={12} />
                    <Glyph d={paths.fitPage} size={12} />
                    <Glyph d={paths.fitWidth} size={12} />
                </StatusGroup>
                <ZoomControls>
                    300% <Down />
                    <Minus size={13} strokeWidth={3} />
                    <ZoomSlider type="range" aria-label="Zoom level" defaultValue="51" />
                    <Plus size={12} strokeWidth={3} />
                    <FullScreen aria-label="Full screen"><Maximize size={12} strokeWidth={1.5} /></FullScreen>
                </ZoomControls>
            </StatusBar>

            <Taskbar>
                <StartButton aria-label="Start"><WindowsLogo /></StartButton>
                <TaskSearch>
                    <Glyph d="M10 1a5 5 0 1 0 .1 0M6 9.500 1 15" size={15} weight={1.4} />
                    <input aria-label="Search" placeholder="Type here to search" />
                    <Flowers />
                </TaskSearch>
                <TaskApp aria-label="Task view"><Glyph d={paths.taskView} size={15} color="#222" /></TaskApp>
                <TaskApp aria-label="Edge"><EdgeIcon /></TaskApp>
                <TaskApp aria-label="Outlook"><OutlookIcon /></TaskApp>
                <TaskApp aria-label="Copilot"><CopilotIcon /></TaskApp>
                <TaskApp aria-label="Files" $open="alert"><FolderIcon /></TaskApp>
                <TaskApp aria-label="WPS Office" $open="yes">
                    <svg width="20" height="20" viewBox="0 0 20 20"><rect width="20" height="20" rx="3" fill="#e8202b" /><g transform="translate(3 3)"><WpsLogo color="#fff" /></g></svg>
                </TaskApp>
                <TaskApp aria-label="Notes" $open="alert"><NotesIcon /></TaskApp>
                <TaskApp aria-label="Zoom" $open="yes"><ZoomAppIcon /></TaskApp>
                <TaskApp aria-label="Chrome" $open="yes"><ChromeIcon /></TaskApp>
                <News><TorchIcon />Today's updates</News>
                <Tray>
                    <ChevronUp size={14} strokeWidth={2} />
                    <Volume2 size={14} strokeWidth={1.8} />
                    <Mic size={13} fill="#111" />
                    <svg width="15" height="12" viewBox="0 0 15 12"><path d="M4 3h10v8H4zM0 3h3v4H0zM14 5h1v4h-1z" fill="#111" /></svg>
                    <Glyph d={paths.camera} size={13} />
                    <Glyph d={paths.wifi} size={12} />
                    ENG
                    <Clock><span>22:16</span><span>11-02-2026</span></Clock>
                    <MessageIcon />
                </Tray>
            </Taskbar>
        </Window>
    );
}
